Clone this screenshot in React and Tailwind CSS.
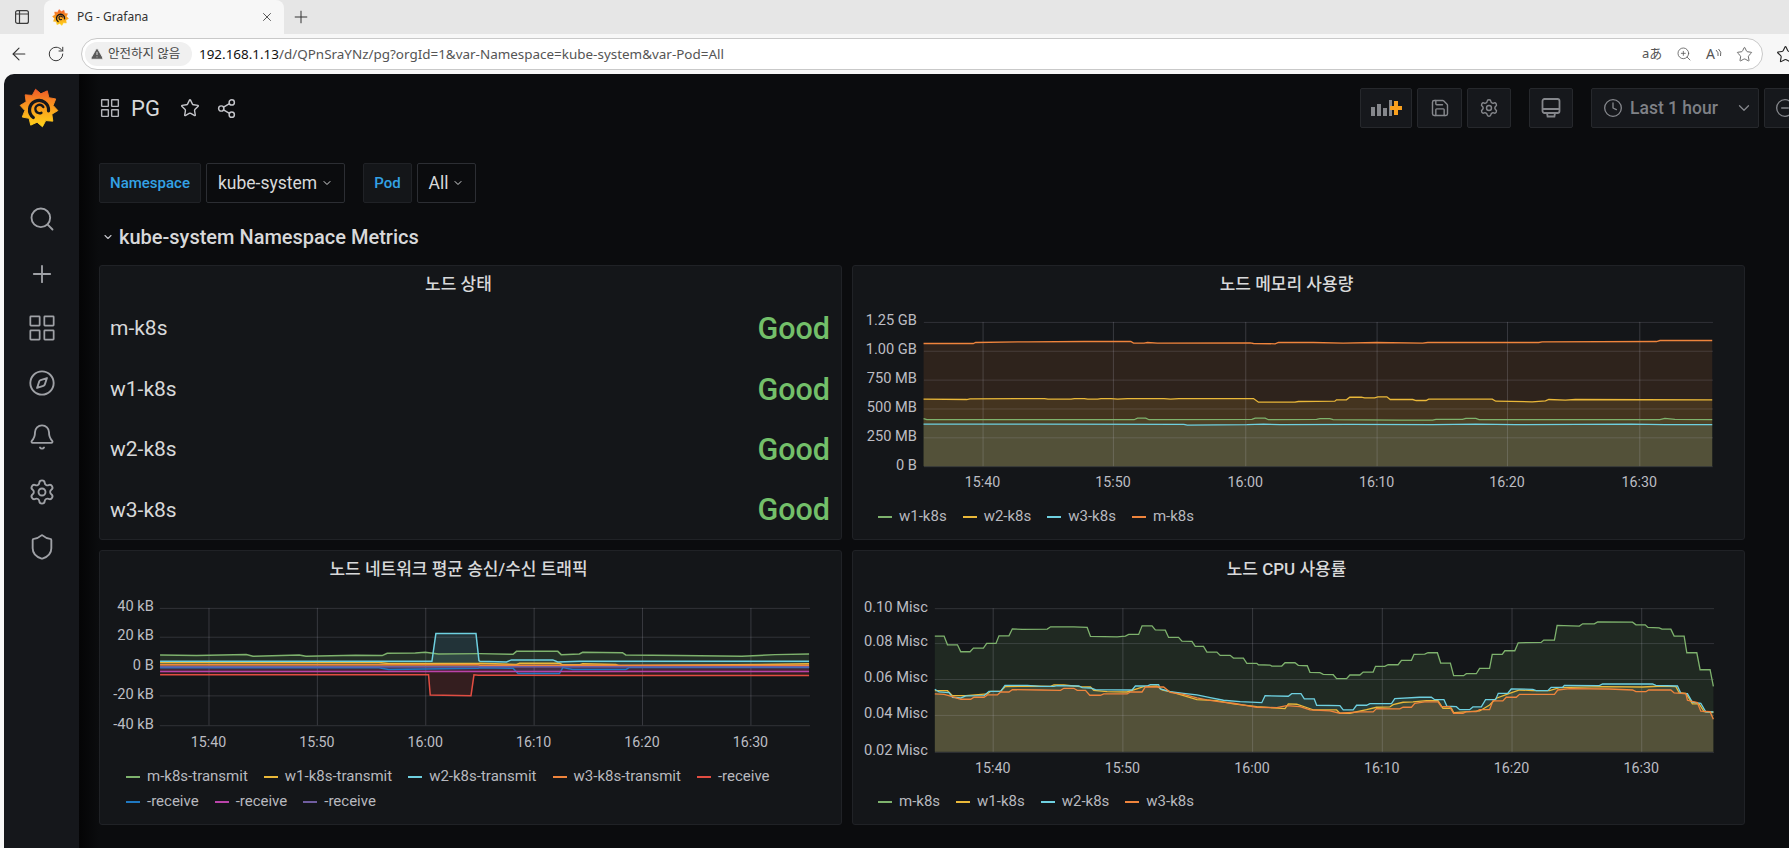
import React from "react";
import { X, Plus, ArrowLeft, RotateCw, TriangleAlert, ZoomIn, Star, Share2, Save, Settings, Clock, ChevronDown, Search, Compass, Bell, Shield, CircleMinus } from "lucide-react";

const C = { green: "#7EB26D", yellow: "#EAB839", cyan: "#6ED0E0", orange: "#EF843C", red: "#E24D42", blue: "#1F78C1", pink: "#BA43A9", purple: "#705DA0" };

const seg = (ox, oy, pts) => pts.map(([x, y]) => [ox + x / 3, oy + y / 3]);
const merge = (a, b) => [...a.filter((p) => p[0] < b[0][0]), ...b];
const line = (pts) => pts.map((p, i) => `${i ? "L" : "M"}${p[0].toFixed(1)} ${p[1].toFixed(1)}`).join(" ");
const area = (pts, base) => `${line(pts)} L${pts[pts.length - 1][0].toFixed(1)} ${base} L${pts[0][0].toFixed(1)} ${base} Z`;

const cpu = (a, b) => merge(seg(850, 550, a), seg(1310, 550, b));
const mem = (a, b) => merge(seg(850, 260, a), seg(1300, 260, b));
const net = (a, b) => merge(seg(95, 550, a), seg(480, 550, b));

const cpuSeries = [
  { c: C.green, d: cpu([[252,258],[280,258],[290,284],[320,284],[330,305],[358,305],[368,294],[398,294],[408,280],[436,280],[445,257],[475,257],[485,236],[515,238],[590,237],[600,230],[670,230],[710,232],[720,259],[800,260],[825,258],[835,253],[865,253],[875,227],[905,227],[915,239],[945,240],[955,262],[985,262],[995,273],[1025,274],[1035,289],[1060,289],[1070,306],[1100,306],[1110,316],[1140,316],[1150,324],[1180,324],[1190,340],[1220,340],[1225,344],[1260,345],[1265,348],[1295,348],[1305,338],[1335,338],[1345,346],[1372,347],[1380,367]],
    [[0,367],[30,368],[40,373],[70,374],[80,386],[110,386],[120,375],[150,375],[160,366],[190,366],[197,349],[225,349],[235,344],[265,344],[275,331],[305,331],[313,313],[345,312],[355,308],[383,308],[393,339],[422,339],[432,377],[462,377],[470,371],[500,371],[510,355],[540,355],[548,313],[578,313],[586,302],[616,302],[626,278],[695,277],[703,270],[735,270],[743,226],[810,228],[820,221],[855,221],[865,215],[970,216],[980,224],[1008,224],[1016,232],[1050,233],[1058,237],[1085,237],[1095,258],[1125,258],[1133,308],[1163,308],[1173,359],[1203,359],[1213,409]]) },
  { c: C.yellow, d: cpu([[252,422],[290,422],[305,437],[345,437],[410,432],[420,424],[450,424],[463,410],[530,408],[600,409],[610,405],[640,405],[690,410],[720,411],[730,421],[770,425],[830,426],[880,410],[920,408],[935,420],[970,428],[1040,449],[1100,452],[1150,462],[1220,470],[1305,476],[1315,462],[1340,463],[1385,478]],
    [[10,480],[80,480],[90,490],[120,490],[170,479],[200,472],[240,471],[250,464],[280,457],[310,456],[350,452],[385,452],[400,475],[425,475],[432,488],[510,483],[540,465],[560,445],[600,430],[630,420],[670,422],[720,422],[750,413],[880,410],[1000,411],[1060,408],[1100,410],[1110,428],[1130,430],[1150,462],[1170,462],[1185,485],[1213,487]]) },
  { c: C.cyan, d: cpu([[252,418],[265,426],[295,428],[305,442],[330,444],[345,438],[400,437],[415,424],[450,424],[463,406],[530,406],[570,409],[610,409],[620,407],[685,408],[695,413],[720,414],[735,419],[845,420],[855,408],[890,408],[900,404],[925,404],[930,417],[960,425],[1000,430],[1040,435],[1080,443],[1120,451],[1170,455],[1235,458],[1245,437],[1315,439],[1325,431],[1353,431],[1363,447],[1393,447]],
    [[20,466],[90,467],[100,480],[130,480],[140,466],[170,466],[180,461],[245,461],[255,446],[330,442],[365,442],[375,449],[403,449],[412,469],[440,470],[450,479],[480,479],[490,471],[515,471],[528,449],[558,449],[566,430],[595,430],[605,417],[670,418],[680,422],[715,422],[725,412],[760,412],[765,406],[870,407],[880,402],[1030,402],[1040,406],[1105,408],[1115,430],[1135,431],[1150,457],[1175,460],[1190,486],[1213,486]]) },
  { c: C.orange, d: cpu([[252,432],[280,433],[305,440],[330,448],[360,448],[370,442],[400,442],[410,435],[440,435],[450,426],[475,426],[485,419],[570,420],[630,421],[640,415],[670,415],[680,421],[705,421],[718,436],[750,436],[760,432],[830,432],[840,426],[875,426],[885,411],[940,411],[960,427],[1000,433],[1040,444],[1070,450],[1110,456],[1150,460],[1190,467],[1220,472],[1280,473],[1310,467],[1350,470],[1380,480]],
    [[0,480],[60,483],[90,490],[150,486],[190,486],[200,476],[270,477],[280,472],[305,472],[315,460],[345,456],[385,456],[395,470],[420,470],[432,490],[460,490],[470,485],[500,485],[510,479],[540,479],[550,453],[580,453],[590,442],[620,442],[630,433],[735,433],[745,420],[780,416],[900,417],[970,420],[980,425],[1010,425],[1018,420],[1085,420],[1095,429],[1130,431],[1135,451],[1165,458],[1175,484],[1203,485],[1213,508]]) },
];

const memSeries = [
  { c: C.green, d: mem([[215,478],[225,481],[850,481],[860,476],[885,476],[895,481],[1205,480],[1215,476],[1245,476],[1255,481],[1400,480],[1420,477],[1450,481],[1500,481]],
    [[60,478],[90,478],[100,481],[300,482],[400,482],[410,480],[490,480],[500,477],[530,477],[540,481],[1085,481],[1100,477],[1130,480],[1243,481]]) },
  { c: C.yellow, d: mem([[215,419],[345,420],[355,418],[580,417],[590,419],[660,419],[670,417],[700,417],[710,419],[740,419],[750,417],[780,417],[800,419],[830,417],[940,417],[960,419],[985,417],[1210,417],[1225,428],[1335,428],[1345,426],[1455,425]],
    [[105,425],[110,421],[140,421],[150,413],[185,413],[195,415],[225,415],[235,412],[262,412],[272,420],[340,420],[350,423],[380,423],[388,419],[580,419],[590,425],[700,427],[740,424],[750,420],[800,422],[830,420],[1243,421]]) },
  { c: C.cyan, d: mem([[215,494],[560,494],[1000,495],[1010,497],[1190,496],[1240,494],[1290,496],[1500,495]],
    [[400,496],[530,494],[650,496],[1000,494],[1100,496],[1243,496]]) },
  { c: C.orange, d: mem([[215,251],[365,251],[372,248],[530,246],[700,245],[840,245],[848,250],[880,250],[890,248],[920,250],[1200,249],[1210,251],[1275,252],[1285,248],[1400,247]],
    [[40,248],[130,250],[230,248],[370,250],[385,248],[640,248],[720,248],[730,246],[1075,245],[1085,242],[1243,242]]) },
];

const netSeries = [
  { c: C.green, d: net([[190,316],[300,318],[450,315],[470,320],[610,316],[630,320],[780,317],[860,318],[875,311],[960,310],[990,308],[1030,313],[1150,312]],
    [[0,312],[100,314],[110,305],[235,305],[245,315],[300,313],[310,308],[430,309],[440,316],[600,318],[790,320],[890,315],[993,313]]) },
  { c: C.yellow, d: net([[190,339],[850,339],[880,342],[1150,342]],
    [[0,341],[110,345],[120,341],[240,341],[250,346],[300,346],[310,343],[410,345],[420,349],[900,344],[993,343]]) },
  { c: C.cyan, d: net([[190,335],[1010,335],[1022,251],[1143,251],[1152,333]],
    [[0,335],[80,337],[95,331],[220,331],[235,337],[300,335],[993,335]]) },
  { c: C.orange, d: net([[190,346],[1150,346]], [[0,347],[993,347]]) },
  { c: C.red, d: net([[190,376],[1000,376],[1005,437],[1128,439],[1137,376],[1150,377]],
    [[0,377],[400,378],[993,378]]) },
  { c: C.blue, d: net([[190,355],[850,355],[880,360],[1150,356]],
    [[0,355],[100,356],[115,372],[240,372],[250,354],[280,360],[440,360],[450,354],[993,354]]) },
  { c: C.pink, d: net([[190,366],[1150,366]], [[0,366],[993,366]]) },
  { c: C.purple, d: net([[190,352],[1150,352]], [[0,352],[993,352]]) },
];

function Chart({ vb, cls, x0, x1, ys, xs, yLabels, xLabels, labelX, xLabelY, base, series, sw = 1.3, fillOp = 0.12 }) {
  return (
    <svg viewBox={vb} className={cls}>
      {series.map((s, i) => <path key={i} d={area(s.d, base)} fill={s.c} fillOpacity={fillOp} />)}
      {ys.map((y) => <line key={y} x1={x0} x2={x1} y1={y + 0.5} y2={y + 0.5} stroke="#ccccdc" strokeOpacity="0.16" />)}
      {xs.map((x) => <line key={x} x1={x + 0.5} x2={x + 0.5} y1={ys[0]} y2={ys[ys.length - 1]} stroke="#ccccdc" strokeOpacity="0.2" />)}
      {series.map((s, i) => <path key={i} d={line(s.d)} fill="none" stroke={s.c} strokeWidth={sw} />)}
      {yLabels.map((t, i) => <text key={t} x={labelX} y={ys[i] - 0.5} textAnchor="end" dominantBaseline="middle" fontSize="14.7" fill="#bcbdc3">{t}</text>)}
      {xLabels.map((t, i) => <text key={t} x={xs[i]} y={xLabelY} textAnchor="middle" dominantBaseline="middle" fontSize="14.3" fill="#bcbdc3">{t}</text>)}
    </svg>
  );
}

function Legend({ items, cls = "" }) {
  return (
    <div className={`mt-auto flex flex-wrap pr-2 pb-[10px] gap-x-4 ${cls}`}>
      {items.map(([t, c], i) => (
        <div key={i} className="flex items-center h-[25px] gap-[7px] text-[15px] text-[#b8b9bf]">
          <svg width="14" height="4" className="block"><rect width="14" height="2" y="1" fill={c} /></svg>
          <span>{t}</span>
        </div>
      ))}
    </div>
  );
}

function Panel({ title, children }) {
  return (
    <section className="flex flex-col h-[275px] min-w-0 rounded-[3px] border border-[#202226] bg-[#141619]">
      <h2 className="shrink-0 h-[37px] pr-[24px] flex items-center justify-center text-[17px] font-medium text-[#d8d9da]">{title}</h2>
      {children}
    </section>
  );
}

function Logo({ id, size }) {
  const pts = [];
  for (let i = 0; i < 20; i++) {
    const r = i % 2 ? 15 : 20;
    const a = (i / 20) * Math.PI * 2 - 1.75;
    pts.push(`${(20 + r * Math.cos(a)).toFixed(1)},${(21 + r * Math.sin(a)).toFixed(1)}`);
  }
  return (
    <svg viewBox="0 0 40 42" width={size} height={size} className="block shrink-0">
      <defs>
        <linearGradient id={id} x1="0" y1="1" x2="0" y2="0">
          <stop offset="0" stopColor="#FFD31A" />
          <stop offset="0.55" stopColor="#F9981E" />
          <stop offset="1" stopColor="#F05A28" />
        </linearGradient>
      </defs>
      <polygon points={pts.join(" ")} fill={`url(#${id})`} strokeLinejoin="round" stroke={`url(#${id})`} />
      <path d="M14 31 A10 10 0 1 1 30 24" fill="none" stroke="#15171b" strokeWidth="3.4" strokeLinecap="round" />
      <path d="M24.5 20 A4.4 4.4 0 1 0 22.5 26" fill="none" stroke="#15171b" strokeWidth="2.6" strokeLinecap="round" />
    </svg>
  );
}

function GridIcon({ size = 24, sw = 2, cls = "" }) {
  return (
    <svg viewBox="0 0 24 24" width={size} height={size} fill="none" stroke="currentColor" strokeWidth={sw} className={`shrink-0 ${cls}`}>
      <rect x="2" y="2" width="8" height="8" rx="0.5" /><rect x="14" y="2" width="8" height="8" rx="0.5" />
      <rect x="2" y="14" width="8" height="8" rx="0.5" /><rect x="14" y="14" width="8" height="8" rx="0.5" />
    </svg>
  );
}

function ToolBtn({ cls, children }) {
  return <div className={`h-10 shrink-0 flex items-center justify-center rounded-[2px] border border-[#26282c] bg-[#16181c] text-[#85878c] ${cls}`}>{children}</div>;
}

const navIcon = "shrink-0";

export default function App() {
  return (
    <div className="w-[1789px] h-[848px] overflow-hidden flex flex-col bg-[#f7f7f7] font-[Roboto,'Noto_Sans_CJK_KR',sans-serif]">
      <div className="h-[34px] shrink-0 flex items-center bg-[#e6e6e6] font-['Noto_Sans','Noto_Sans_CJK_KR',sans-serif]">
        <div className="w-[44px] flex justify-center">
          <svg viewBox="0 0 16 16" width="16" height="16" fill="none" stroke="#3a3a3a" strokeWidth="1.2"><rect x="1.6" y="1.6" width="12.8" height="12.8" rx="2" /><path d="M5.5 2v12M2 5h12" /></svg>
        </div>
        <div className="w-[240px] h-[34px] flex items-center bg-[#f7f7f7] rounded-t-lg pl-[8px] pr-[10px]">
          <Logo id="fav" size={17} />
          <span className="ml-[8px] flex-1 text-[12px] text-[#333]">PG - Grafana</span>
          <X size={14} strokeWidth={1.4} className="shrink-0 text-[#333]" />
        </div>
        <Plus size={20} strokeWidth={1.2} className="shrink-0 ml-[7px] text-[#333]" />
      </div>
      <div className="h-[40px] shrink-0 flex items-center font-['Noto_Sans','Noto_Sans_CJK_KR',sans-serif]">
        <ArrowLeft size={20} strokeWidth={1.3} className="shrink-0 ml-[9px] text-[#333]" />
        <RotateCw size={18} strokeWidth={1.3} className="shrink-0 ml-[18px] text-[#333]" />
        <div className="ml-[16px] w-[1682px] h-[32px] shrink-0 flex items-center rounded-full border border-[#c9c9c9] bg-white pl-[3px] pr-[8px]">
          <div className="h-[24px] w-[107px] shrink-0 flex items-center gap-[4px] pl-[5px] rounded-full bg-[#f0f0f0] text-[12.5px] text-[#444]">
            <TriangleAlert size={14} fill="#5a5a5a" stroke="#f0f0f0" strokeWidth={1.5} className="shrink-0" />
            <span className="whitespace-nowrap">안전하지 않음</span>
          </div>
          <div className="ml-[7px] flex-1 text-[13.45px] whitespace-nowrap text-[#555]">
            <span className="text-[#111]">192.168.1.13</span>/d/QPnSraYNz/pg?orgId=1&amp;var-Namespace=kube-system&amp;var-Pod=All
          </div>
          <div className="flex items-center text-[#555]">
            <span className="w-[20px] text-[13px] whitespace-nowrap">aあ</span>
            <ZoomIn size={16} strokeWidth={1.2} className="shrink-0 ml-[14px]" />
            <div className="ml-[14px] flex items-center">
              <span className="text-[14px] leading-none">A</span>
              <svg width="7" height="10" viewBox="0 0 7 10" fill="none" stroke="#555" strokeWidth="0.9"><path d="M1 1 Q4 3.5 3 7M3.5 0 Q7 3 5.5 7" /></svg>
            </div>
            <Star size={17} strokeWidth={1.2} className="shrink-0 ml-[14px] mr-[1px]" />
          </div>
        </div>
        <Star size={19} strokeWidth={1.4} className="ml-[13px] shrink-0 text-[#222]" />
      </div>
      <div className="flex-1 min-h-0 ml-[4px] flex rounded-tl-[10px] overflow-hidden text-[#d8d9da]">
        <nav className="w-[75px] shrink-0 bg-[#15171b] flex flex-col items-center text-[#9fa1a6]">
          <div className="mt-[14px] mr-[5px]"><Logo id="lg" size={40} /></div>
          <div className="mt-[77px] flex flex-col items-center gap-[26.6px]">
            <Search size={28} strokeWidth={1.6} className={navIcon} />
            <Plus size={28} strokeWidth={1.6} className={navIcon} />
            <GridIcon size={28} sw={1.5} />
            <Compass size={28} strokeWidth={1.6} className={navIcon} />
            <Bell size={28} strokeWidth={1.6} className={navIcon} />
            <Settings size={28} strokeWidth={1.6} className={navIcon} />
            <Shield size={28} strokeWidth={1.6} className={navIcon} />
          </div>
        </nav>
        <main className="flex-1 min-w-0 pl-[20px] pt-[14px] overflow-hidden bg-[linear-gradient(90deg,#040405_0,#0b0c0e_20px)]">
          <header className="h-10 flex items-center">
            <div className="w-[1261px] shrink-0 flex items-center">
              <GridIcon size={20} sw={1.7} cls="ml-[1px] text-[#b5b6bb]" />
              <span className="ml-[11px] text-[22px] text-[#d8d9da]">PG</span>
              <Star size={20} strokeWidth={1.7} className="shrink-0 ml-[20px] text-[#c4c5ca]" />
              <Share2 size={21} strokeWidth={1.7} className="shrink-0 ml-[16px] text-[#c4c5ca]" />
            </div>
            <ToolBtn cls="w-[52px]">
              <svg viewBox="0 0 32 18" width="32" height="18">
                <path d="M1 8h4v9H1zM7 5h4v12H7zM13 9h4v8h-4zM19 1h3v16h-3z" fill="#85878c" />
                <path d="M24 2h4v5h4v4h-4v5h-4v-5h-4V7h4z" fill="#F9A01E" />
              </svg>
            </ToolBtn>
            <ToolBtn cls="w-[45px] ml-[5px]"><Save size={20} strokeWidth={1.7} /></ToolBtn>
            <ToolBtn cls="w-[44px] ml-[5px]"><Settings size={20} strokeWidth={1.7} /></ToolBtn>
            <ToolBtn cls="w-[44px] ml-[18px]">
              <svg viewBox="0 0 20 20" width="20" height="20" fill="none" stroke="currentColor" strokeWidth="1.8">
                <rect x="1.5" y="1" width="17" height="14" rx="2" /><path d="M2 11h16" /><path d="M6 15l.6 3.5h6.8L14 15" />
              </svg>
            </ToolBtn>
            <ToolBtn cls="w-[168px] ml-[18px] justify-start pl-[11px] gap-[7px]">
              <Clock size={20} strokeWidth={1.6} className="shrink-0" />
              <span className="text-[17.5px] font-medium text-[#7f8186]">Last 1 hour</span>
              <ChevronDown size={18} strokeWidth={1.7} className="shrink-0 ml-[10px]" />
            </ToolBtn>
            <ToolBtn cls="w-[50px] ml-[5px] justify-start pl-[10px]"><CircleMinus size={20} strokeWidth={1.6} /></ToolBtn>
          </header>

          <div className="mt-[35px] h-10 flex items-stretch">
            <div className="w-[102px] flex items-center justify-center rounded-[2px] border border-[#202226] bg-[#141619] text-[15px] font-medium text-[#33a2e5]">Namespace</div>
            <div className="ml-[5px] w-[139px] flex items-center justify-center gap-[4px] rounded-[2px] border border-[#2c2e33] text-[17.5px] text-[#d8d9da]">kube-system<ChevronDown size={12} strokeWidth={2} className="shrink-0" /></div>
            <div className="ml-[18px] w-[49px] flex items-center justify-center rounded-[2px] border border-[#202226] bg-[#141619] text-[15px] font-medium text-[#33a2e5]">Pod</div>
            <div className="ml-[5px] w-[59px] flex items-center justify-center gap-[4px] rounded-[2px] border border-[#2c2e33] text-[17.5px] text-[#d8d9da]">All<ChevronDown size={12} strokeWidth={2} className="shrink-0" /></div>
          </div>

          <div className="mt-[20px] mb-[14px] h-[28px] flex items-center">
            <ChevronDown size={12} strokeWidth={2.2} className="shrink-0 ml-[3px] text-[#c4c5ca]" />
            <span className="ml-[5px] text-[20px] font-medium text-[#d8d9da]">kube-system Namespace Metrics</span>
          </div>

          <div className="grid grid-cols-[743px_893px] grid-rows-[275px_275px] gap-[10px]">
            <Panel title="노드 상태">
              <div className="flex flex-col pl-[10px] pr-[11px] -mt-[4px]">
                {["m-k8s", "w1-k8s", "w2-k8s", "w3-k8s"].map((n) => (
                  <div key={n} className="flex items-center justify-between h-[60.4px]">
                    <span className="text-[21px] text-[#d8d9da]">{n}</span>
                    <span className="text-[30.5px] font-medium text-[#73BF69]">Good</span>
                  </div>
                ))}
              </div>
            </Panel>
            <Panel title="노드 메모리 사용량">
              <Chart vb="852 303 893 202" cls="block w-[891px] h-[202px]" x0={922} x1={1715}
                ys={[322, 351, 380, 409, 438, 467]} xs={[981, 1112, 1245, 1377, 1508, 1641]}
                yLabels={["1.25 GB", "1.00 GB", "750 MB", "500 MB", "250 MB", "0 B"]}
                xLabels={["15:40", "15:50", "16:00", "16:10", "16:20", "16:30"]}
                labelX={915} xLabelY={484} base={467} series={memSeries} />
              <Legend items={[["w1-k8s", C.green], ["w2-k8s", C.yellow], ["w3-k8s", C.cyan], ["m-k8s", C.orange]]} cls="pl-[25px]" />
            </Panel>
            <Panel title="노드 네트워크 평균 송신/수신 트래픽">
              <Chart vb="99 588 743 177" cls="block w-[741px] h-[177px]" x0={158} x1={812}
                ys={[608, 637, 667, 696, 726]} xs={[207, 316, 425, 534, 643, 752]}
                yLabels={["40 kB", "20 kB", "0 B", "-20 kB", "-40 kB"]}
                xLabels={["15:40", "15:50", "16:00", "16:10", "16:20", "16:30"]}
                labelX={152} xLabelY={744} base={667} series={netSeries} sw={1.5} fillOp={0.16} />
              <Legend items={[["m-k8s-transmit", C.green], ["w1-k8s-transmit", C.yellow], ["w2-k8s-transmit", C.cyan], ["w3-k8s-transmit", C.orange], ["-receive", C.red], ["-receive", C.blue], ["-receive", C.pink], ["-receive", C.purple]]} cls="pl-[26px]" />
            </Panel>
            <Panel title="노드 CPU 사용률">
              <Chart vb="852 588 893 190" cls="block w-[891px] h-[190px]" x0={934} x1={1715}
                ys={[608, 643, 679, 715, 752]} xs={[992, 1122, 1252, 1382, 1512, 1642]}
                yLabels={["0.10 Misc", "0.08 Misc", "0.06 Misc", "0.04 Misc", "0.02 Misc"]}
                xLabels={["15:40", "15:50", "16:00", "16:10", "16:20", "16:30"]}
                labelX={927} xLabelY={769} base={752} series={cpuSeries} />
              <Legend items={[["m-k8s", C.green], ["w1-k8s", C.yellow], ["w2-k8s", C.cyan], ["w3-k8s", C.orange]]} cls="pl-[25px]" />
            </Panel>
          </div>
        </main>
      </div>
    </div>
  );
}
